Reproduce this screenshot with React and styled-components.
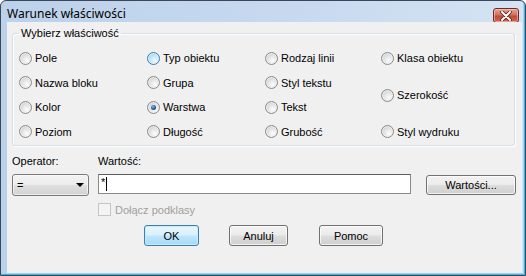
import React from "react";
import styled, { createGlobalStyle, css } from "styled-components";

const GlobalStyle = createGlobalStyle`
  html, body {
    margin: 0;
    padding: 0;
    background: #ffffff;
  }
  body {
    font-family: "Liberation Sans", Arial, sans-serif;
    font-size: 11px;
    color: #000;
  }
`;

// window chrome
const Window = styled.div`
  width: 526px;
  height: 276px;
  box-sizing: border-box;
  display: flex;
  flex-direction: column;
  border: 1px solid #3b4656;
  border-radius: 6px 6px 0 0;
  padding: 0 3px 2px 6px;
  background: linear-gradient(90deg, #bcd1ea 0%, #c6d9ef 55%, #d5e3f3 100%);
  box-shadow: inset -1px -1px 0 #3cb4ee, inset -2px -2px 0 #9fd4f2;
`;

const TitleBar = styled.div`
  height: 21px;
  display: flex;
  align-items: center;
  justify-content: space-between;
  padding-right: 3px;
`;

const Title = styled.span`
  font-family: "Noto Sans", "Liberation Sans", sans-serif;
  font-size: 12px;
  color: #000;
  padding-top: 3px;
`;

const CloseButton = styled.div`
  width: 26px;
  height: 15px;
  margin-top: 8px;
  box-sizing: border-box;
  border: 1px solid #6b2a24;
  border-radius: 3px;
  background: linear-gradient(#e4a293 0%, #d27360 45%, #c04a36 55%, #d06a54 100%);
  box-shadow: inset 0 0 0 1px rgba(255, 220, 210, 0.5);
  display: flex;
  align-items: center;
  justify-content: center;
`;

const Client = styled.div`
  flex: 1;
  background: #f0f0f0;
  padding: 5px 0 0 5px;
`;

// group box
const GroupBox = styled.fieldset`
  margin: 0;
  width: 503px;
  height: 119px;
  box-sizing: border-box;
  border: 1px solid #d5dfe5;
  border-radius: 3px;
  padding: 0 6px;
  box-shadow: 1px 1px 0 #ffffff, inset 1px 1px 0 #ffffff;
`;

const Legend = styled.legend`
  padding: 0 2px;
  line-height: 13px;
`;

const RadioGrid = styled.div`
  display: grid;
  grid-template-columns: 128px 118px 116px 1fr;
  grid-template-rows: repeat(4, 24.5px);
  padding-top: 6px;
`;

const Option = styled.label`
  display: flex;
  align-items: center;
  gap: 3px;
  ${(p) => p.$span && css`grid-row: ${p.$span};`}
`;

const RadioDot = styled.span`
  width: 13px;
  height: 13px;
  box-sizing: border-box;
  border-radius: 50%;
  flex-shrink: 0;
  position: relative;
  border: 1px solid #8a8b8c;
  background: radial-gradient(circle at 62% 68%, #fdfdfd 0%, #e4e4e4 45%, #bfbfbf 100%);
  box-shadow: inset 0 0 0 1px #efefef;

  ${(p) =>
    p.$hover &&
    css`
      border-color: #3c7fb1;
      background: radial-gradient(circle at 62% 68%, #f4fbff 0%, #c3e6fa 45%, #83c6ee 100%);
      box-shadow: inset 0 0 0 1px #e0f3fd;
    `}

  ${(p) =>
    p.$checked &&
    css`
      &::after {
        content: "";
        position: absolute;
        left: 3px;
        top: 3px;
        width: 5px;
        height: 5px;
        border-radius: 50%;
        background: radial-gradient(circle at 40% 35%, #7fbbe8 0%, #1f5c9c 55%, #0b2f5e 100%);
      }
    `}
`;

// lower part
const Row = styled.div`
  display: flex;
  align-items: flex-start;
  margin-top: ${(p) => p.$mt}px;
  padding-left: ${(p) => p.$pl || 0}px;
`;

const Cell = styled.div`
  width: ${(p) => p.$w}px;
  flex-shrink: 0;
  line-height: 13px;
`;

const Combo = styled.div`
  width: 77px;
  height: 22px;
  box-sizing: border-box;
  border: 1px solid #7a7a7a;
  border-radius: 3px;
  background: linear-gradient(#f3f3f3 0%, #ececec 48%, #dfdfdf 52%, #d2d2d2 100%);
  box-shadow: inset 0 0 0 1px rgba(255, 255, 255, 0.6);
  display: flex;
  align-items: center;
  justify-content: space-between;
  padding: 0 4px 0 4px;
`;

const Arrow = styled.span`
  width: 0;
  height: 0;
  border-left: 4px solid transparent;
  border-right: 4px solid transparent;
  border-top: 4px solid #000;
`;

const TextBox = styled.div`
  width: 313px;
  height: 20px;
  box-sizing: border-box;
  border: 1px solid #8a8a8a;
  border-top-color: #5e5e5e;
  background: #ffffff;
  display: flex;
  align-items: flex-start;
  padding: 1px 0 0 2px;
`;

const Caret = styled.span`
  width: 1px;
  height: 14px;
  margin-top: 1px;
  margin-left: 1px;
  background: #000;
`;

const Button = styled.button`
  font: inherit;
  color: #000;
  width: ${(p) => p.$w}px;
  height: ${(p) => p.$h || 21}px;
  margin-top: ${(p) => p.$top || 0}px;
  margin-right: ${(p) => p.$mr || 0}px;
  padding: 0;
  box-sizing: border-box;
  border: 1px solid #707070;
  border-radius: 3px;
  background: linear-gradient(#f2f2f2 0%, #ebebeb 48%, #dddddd 52%, #cfcfcf 100%);
  box-shadow: inset 0 0 0 1px rgba(255, 255, 255, 0.75);
  flex-shrink: 0;

  ${(p) =>
    p.$default &&
    css`
      border-color: #3c7fb1;
      background: linear-gradient(#eaf6fd 0%, #d9f0fc 48%, #bee6fd 52%, #a7d9f5 100%);
      box-shadow: inset 0 0 0 1px #c9ecfc;
    `}
`;

const CheckLabel = styled.label`
  display: flex;
  align-items: center;
  gap: 4px;
  color: #a0a0a0;
`;

const CheckBox = styled.span`
  width: 13px;
  height: 13px;
  box-sizing: border-box;
  border: 1px solid #c5c5c5;
  background: #f4f4f4;
`;

const radios = [
  { label: "Pole", col: 1, row: "1" },
  { label: "Nazwa bloku", col: 1, row: "2" },
  { label: "Kolor", col: 1, row: "3" },
  { label: "Poziom", col: 1, row: "4" },
  { label: "Typ obiektu", col: 2, row: "1", hover: true },
  { label: "Grupa", col: 2, row: "2" },
  { label: "Warstwa", col: 2, row: "3", checked: true },
  { label: "Długość", col: 2, row: "4" },
  { label: "Rodzaj linii", col: 3, row: "1" },
  { label: "Styl tekstu", col: 3, row: "2" },
  { label: "Tekst", col: 3, row: "3" },
  { label: "Grubość", col: 3, row: "4" },
  { label: "Klasa obiektu", col: 4, row: "1" },
  { label: "Szerokość", col: 4, row: "2 / span 2" },
  { label: "Styl wydruku", col: 4, row: "4" },
];

export default function App() {
  return (
    <>
      <GlobalStyle />
      <Window>
        <TitleBar>
          <Title>Warunek właściwości</Title>
          <CloseButton>
            <svg width="12" height="10" viewBox="0 0 12 10">
              <path
                d="M2 1 L10 9 M10 1 L2 9"
                stroke="#4a1810"
                strokeWidth="3.4"
                strokeLinecap="round"
              />
              <path
                d="M2 1 L10 9 M10 1 L2 9"
                stroke="#ffffff"
                strokeWidth="2"
                strokeLinecap="round"
              />
            </svg>
          </CloseButton>
        </TitleBar>
        <Client>
          <GroupBox>
            <Legend>Wybierz właściwość</Legend>
            <RadioGrid>
              {radios.map((r) => (
                <Option
                  key={r.label}
                  style={{ gridColumn: r.col }}
                  $span={r.row}
                >
                  <RadioDot $hover={r.hover} $checked={r.checked} />
                  {r.label}
                </Option>
              ))}
            </RadioGrid>
          </GroupBox>

          <Row $mt={9} $pl={0}>
            <Cell $w={86}>Operator:</Cell>
            <Cell $w={200}>Wartość:</Cell>
          </Row>

          <Row $mt={6}>
            <Cell $w={86}>
              <Combo>
                <span>=</span>
                <Arrow />
              </Combo>
            </Cell>
            <Cell $w={328}>
              <TextBox>
                <span>*</span>
                <Caret />
              </TextBox>
            </Cell>
            <Button $w={90} $h={20} $top={1}>
              Wartości...
            </Button>
          </Row>

          <Row $mt={7} $pl={86}>
            <CheckLabel>
              <CheckBox />
              Dołącz podklasy
            </CheckLabel>
          </Row>

          <Row $mt={9} $pl={132}>
            <Button $w={55} $mr={30} $default>
              OK
            </Button>
            <Button $w={59} $mr={31}>
              Anuluj
            </Button>
            <Button $w={64}>Pomoc</Button>
          </Row>
        </Client>
      </Window>
    </>
  );
}
